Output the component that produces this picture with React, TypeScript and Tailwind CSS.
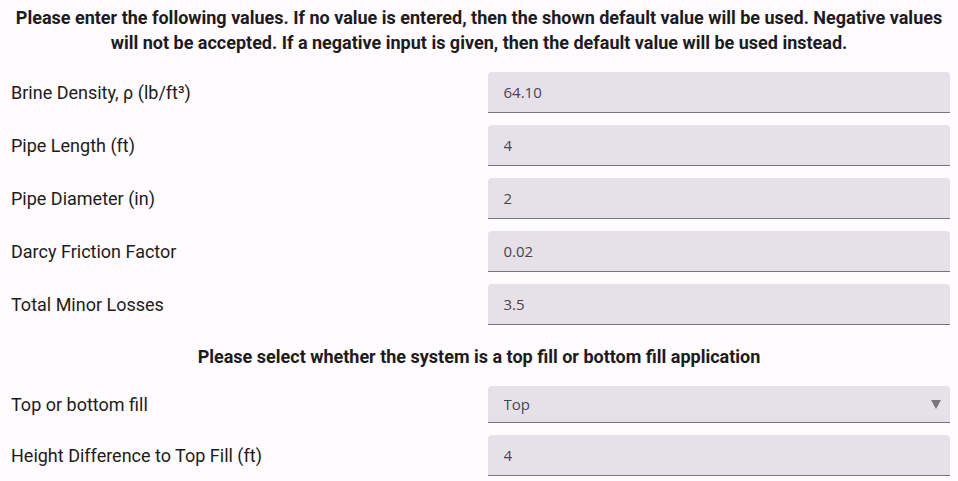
const fields = [
  { label: "Brine Density, ρ (lb/ft³)", value: "64.10" },
  { label: "Pipe Length (ft)", value: "4" },
  { label: "Pipe Diameter (in)", value: "2" },
  { label: "Darcy Friction Factor", value: "0.02" },
  { label: "Total Minor Losses", value: "3.5" },
]

function Field({ label, value }: { label: string; value: string }) {
  return (
    <div className="grid grid-cols-2 gap-[17px] items-center">
      <label className="pl-[3px] text-[18px]">{label}</label>
      <input
        defaultValue={value}
        className="h-[41px] w-full rounded-t-[4px] bg-[#e6e0e9] border-b border-[#79747e] px-4 text-[15px] text-[#49454f] outline-none font-['Open_Sans',sans-serif]"
      />
    </div>
  )
}

export default function App() {
  return (
    <div className="min-h-screen bg-[#fffbfe] text-[#1d1b20] font-['Roboto',sans-serif] px-2 pt-[5px]">
      <p className="text-center font-bold text-[18px] leading-[25px]">
        Please enter the following values. If no value is entered, then the shown default value will be used. Negative values will not be accepted. If a negative input is given, then the default value will be used instead.
      </p>
      <div className="mt-[17px] flex flex-col gap-[12px]">
        {fields.map((f) => (
          <Field key={f.label} {...f} />
        ))}
      </div>
      <p className="text-center font-bold text-[18px] leading-[25px] mt-[19px]">
        Please select whether the system is a top fill or bottom fill application
      </p>
      <div className="mt-[17px] flex flex-col gap-[12px]">
        <div className="grid grid-cols-2 gap-[17px] items-center">
          <label className="pl-[3px] text-[18px]">Top or bottom fill</label>
          <div className="relative">
            <select
              defaultValue="Top"
              className="appearance-none h-[37px] w-full rounded-t-[4px] bg-[#e6e0e9] border-b border-[#79747e] px-4 text-[15px] text-[#49454f] outline-none font-['Open_Sans',sans-serif]"
            >
              <option>Top</option>
              <option>Bottom</option>
            </select>
            <span className="pointer-events-none absolute right-[9px] top-[14px] w-0 h-0 border-l-[5px] border-r-[5px] border-t-[9px] border-l-transparent border-r-transparent border-t-[#79747e]" />
          </div>
        </div>
        <Field label="Height Difference to Top Fill (ft)" value="4" />
      </div>
    </div>
  )
}
